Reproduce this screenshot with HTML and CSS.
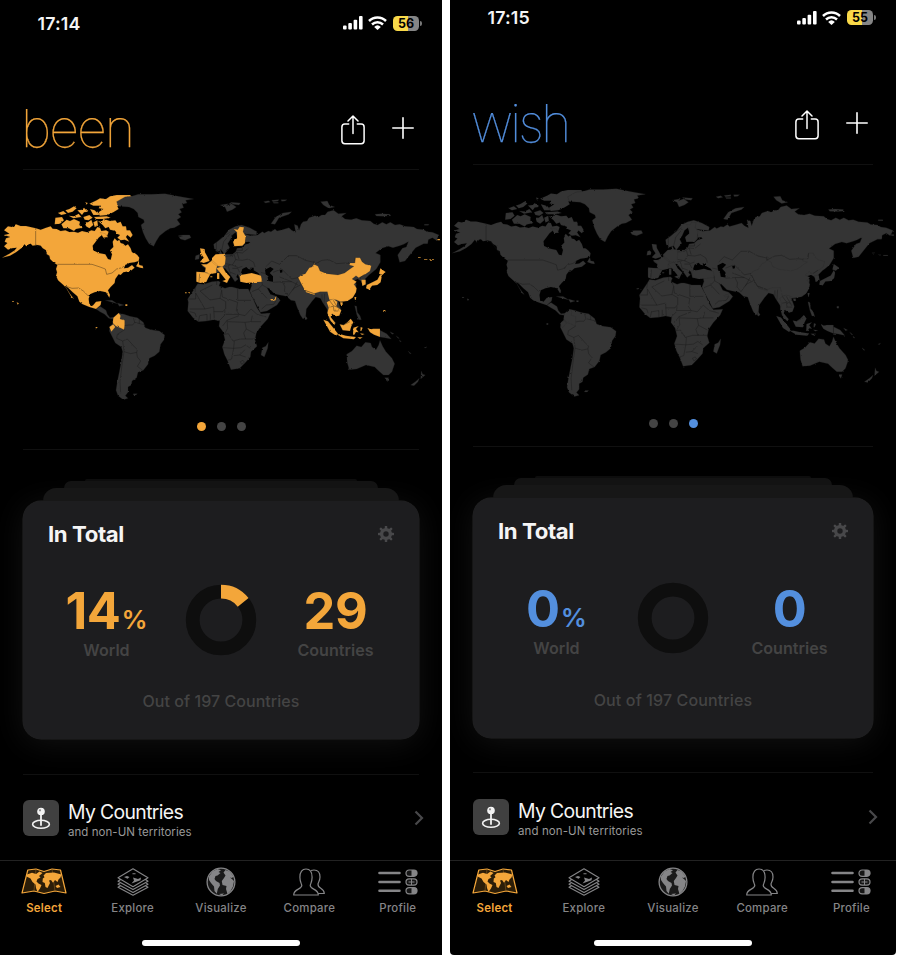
FILE: index.html
```html
<!DOCTYPE html>
<html lang="en">
<head>
<meta charset="utf-8">
<title>been</title>
<link rel="stylesheet" href="styles.css">
</head>
<body>
<svg class="defs" aria-hidden="true">
  <filter id="coast" x="0" y="0" width="1" height="1" color-interpolation-filters="sRGB"><feTurbulence type="fractalNoise" baseFrequency=".3" numOctaves="2" seed="4"/><feDisplacementMap in="SourceGraphic" scale="2" xChannelSelector="R" yChannelSelector="G"/></filter>
  <symbol id="world" viewBox="0 0 1326 660">
    <g class="land">
      <path d="M288,372L300,364 318,376 322,388 330,398 342,396 338,402 326,400 314,388 300,380ZM316,346L336,346 352,356 336,352ZM352,354L372,360 358,364Z"/>
      <path d="M356,384L372,388 390,394 412,398 430,412 436,428 452,434 478,438 494,450 492,464 482,478 478,500 464,512 448,520 444,538 430,556 414,562 410,578 396,588 394,600 384,606 384,622 376,632 384,640 370,644 354,632 348,616 352,590 358,560 364,530 368,500 364,486 346,474 334,450 328,438 330,424 338,416 340,398ZM400,626l12,0-4,4-8,0z"/>
    </g>
    <g class="seen">
      <path d="M12,136L24,124 36,126 48,118 62,123 78,123 108,130 122,134 138,128 152,124 158,131 170,132 182,138 196,136 208,141 222,140 234,143 246,138 262,142 274,136 284,138 292,126 300,128 304,138 318,136 326,140 322,152 306,150 296,158 286,172 278,182 280,196 296,204 316,208 324,222 332,224 336,208 330,196 340,186 338,170 344,160 352,168 358,164 362,174 370,176 376,182 384,178 392,190 396,202 404,204 412,210 418,218 416,228 404,232 388,234 376,240 372,250 384,248 396,240 404,248 392,258 370,262 362,270 356,268 346,282 344,294 332,306 324,316 330,330 328,338 318,322 300,318 284,322 270,328 266,342 268,356 278,362 288,350 304,348 302,360 288,372 268,366 248,358 238,350 232,334 218,322 204,308 196,304 210,326 222,342 214,336 198,308 190,300 174,286 168,272 171,262 168,252 172,240 160,232 150,222 148,212 140,208 138,196 128,190 122,182 112,180 98,182 92,176 86,178 80,186 74,178 64,190 48,202 30,212 6,218 28,206 44,196 50,188 36,190 24,194 12,184 22,174 14,170 18,160 30,156 12,150 28,146Z"/>
      <path d="M268,56L290,46 300,40 318,42 330,34 350,30 390,30 400,40 384,48 372,52 366,60 352,64 356,72 340,82 322,90 300,92 292,84 310,72 296,70 300,62 280,62ZM166,98L186,96 192,106 180,116 164,118ZM184,118L200,104 210,108 222,102 240,110 238,120 248,128 228,132 222,138 206,130 190,130ZM174,84L190,78 200,86 184,90ZM196,76L208,72 222,64 230,70 218,80 204,84ZM206,92L222,94 236,86 244,96 220,100ZM232,76L246,74 252,68 264,80 252,82 246,90ZM250,96L268,90 278,98 266,106 254,104ZM254,112L264,112 274,104 280,120 268,130 258,124ZM282,96L320,94 332,98 310,102 288,102ZM270,72L284,76 290,82 300,90 280,90ZM256,52l8,2-6,5zM300,142l16,4 8,10-14,2zM280,112l12,-6 2,16-10,4z"/>
      <path d="M294,108L304,110 312,102 330,108 346,106 352,114 362,110 368,124 378,124 380,136 390,136 398,150 392,158 382,150 378,156 388,170 374,164 362,166 352,158 360,150 350,146 346,138 330,134 326,126 316,130 308,120ZM408,244l8,-14 2,10 10,2 2,8-10,-2z"/>
      <path d="M340,398L356,384 362,392 360,402 374,406 374,422 372,434 360,428 348,424 338,414ZM328,426L340,418 346,426 334,440ZM36,348h6v2h-6zM50,352l7,3-4,4zM287,426h5v4h-5zM376,358h6v5h-6z"/>
    </g>
    <path class="border" d="M107,130V180L122,184 132,198 148,218M172,238H276L300,246 316,252 320,268 336,264 350,252 366,248 376,240M198,304L216,310 236,309 250,318 264,332"/>
    <path class="border" d="M374,422L384,420 398,420 404,412M400,398L404,412 436,420M418,402V416M374,434L352,448 350,460 368,468 382,462 402,484 412,494 410,502 M368,468L372,500 392,506 410,502 412,516 422,528 412,544 428,556M372,500L366,540 360,590 362,625"/>
    <g transform="translate(435 0)">
      <g class="land">
        <path d="M-85,50L-60,36 -40,34 -20,28 20,28 60,26 100,34 146,42 122,46 126,54 112,58 116,68 104,72 110,82 100,88 108,96 96,104 106,118 88,128 76,130 62,138 44,152 34,168 26,184 12,176 2,160 -6,142 -12,120 -2,112 -4,104 -20,96 -22,84 -34,72 -48,66 -80,64Z"/>
        <path d="M208,192L206,178 222,166 238,152 252,134 272,124 290,120 314,128 336,140 334,150 310,148 300,146 298,160 304,172 292,184 268,182 266,168 278,158 272,142 262,150 256,164 248,176 254,188 246,198 238,208 230,196 216,200Z"/>
        <path d="M296,146L316,152 338,150 352,140 358,144 370,138 378,140 390,132 396,138 412,134 432,128 440,136 452,142 448,118 458,122 462,136 468,118 474,110 486,108 492,98 510,92 520,96 530,90 540,90 548,80 566,76 580,86 604,84 590,94 600,102 618,104 634,100 650,106 676,108 686,116 698,120 712,112 724,118 736,112 750,120 764,118 780,124 806,126 816,132 836,134 846,140 862,142 882,150 874,166 862,158 850,164 848,176 836,176 812,188 796,208 780,228 764,232 758,210 772,190 784,186 790,170 776,178 764,182 744,188 730,184 710,190 692,204 706,210 706,232 694,252 682,262 672,270 660,282 664,298 654,302 648,288 638,282 624,288 634,296 632,316 626,334 612,346 590,350 580,352 588,374 574,394 560,386 556,396 572,414 566,418 552,402 546,372 534,354 526,340 512,336 500,350 484,372 482,396 474,402 466,390 456,366 450,348 438,346 424,334 404,330 388,326 372,310 366,308 376,328 394,334 406,346 396,360 366,378 346,382 336,362 320,332 314,318 320,302 318,292 304,292 286,290 282,276 278,268 274,276 280,282 270,290 262,278 250,262 240,250 230,250 226,262 206,264 194,268 186,288 170,292 154,288 154,264 178,262 184,252 170,242 186,236 200,228 212,212 222,208 226,196 232,208 262,208 272,200 276,190 290,188 304,176Z"/>
        <path d="M158,296L176,298 200,290 220,288 226,292 222,302 240,310 252,306 262,306 284,312 310,312 322,336 336,368 348,386 376,384 368,402 348,424 334,444 330,464 336,484 318,500 316,516 300,534 284,550 258,554 248,528 238,508 232,486 240,464 234,440 222,424 224,408 206,404 186,408 160,410 144,398 128,378 130,352 128,342 140,324 152,306ZM352,488L362,484 370,472 368,490 358,516 348,510Z"/>
        <path d="M378,116L392,96 414,84 440,80 432,88 402,98 390,118ZM226,60L250,56 244,62 260,56 274,66 262,74 246,80 240,66ZM256,52L286,54 282,60 264,58ZM100,152L114,150 134,150 138,158 120,166 106,162ZM356,50l14,-3 6,4-14,3zM380,46l20,-2 0,4-16,2zM408,44l18,0-6,4-10,1zM384,52l16,0 0,3-14,0zM527,50L547,48 553,60 569,66 551,70 535,60ZM690,88l20,-2 24,2 4,4-20,2-24,-1zM838,118l14,0-2,3-12,0zM150,224L152,212 164,208 162,222Z"/>
      </g>
      <path class="sea" d="M288,264L292,252 304,246 310,252 318,254 316,248 326,248 326,256 340,264 344,270 320,266 304,268 290,270ZM360,254L376,246 386,252 378,260 374,264 384,274 384,290 370,288 368,276 362,268ZM404,256l8,-2 0,8-6,2zM300,172l12,-2 4,4-12,4z"/>
      <g class="seen">
        <path d="M266,132L278,134 284,125 297,127 294,140 302,154 300,174 292,182 268,184 264,170 276,160 276,142ZM165,190L179,192 180,202 188,216 194,228 176,234 165,230 176,218 168,206ZM168,238L186,238 202,226 218,240 214,252 214,264 194,268 180,262 182,248ZM198,222L212,208 240,206 242,220 240,238 232,246 214,242 202,232ZM154,260L178,262 196,268 188,282 184,291 166,294 154,290ZM214,250L232,244 242,262 256,276 252,282 246,294 232,288 242,284 226,264ZM216,264h7v18h-7zM284,270L300,268 320,264 334,268 348,272 352,290 330,292 304,294 286,290ZM378,342l8,0 8,-8-2,12-8,2zM196,274h6v3h-6zM120,322h5v3h-5zM130,322h5v3h-5z"/>
      </g>
      <path class="border" d="M214,206V172L230,158 254,142M230,196L236,170 256,146M164,266L162,290M242,214L262,212 276,202 292,204 310,190M242,236L262,240 272,224 268,210M272,224L292,226 310,222 326,232 330,246M262,240L280,248 292,244M272,196H292V188M276,202L282,222M250,244L256,266M262,250H278L284,262M256,262L272,268M240,244L256,240M345,262L364,266M350,284L352,300 340,312 320,320M352,300L366,308M340,312L366,340M384,292L412,290 420,306 418,318 430,332M364,244L380,228 404,238 430,212 455,212 481,226 507,232M384,262L410,252 440,282 459,278M404,276L440,290M412,290L440,290 459,300M350,372L364,360 386,358 394,346M430,332L446,310 466,300"/>
      <path class="border" d="M152,306L150,322M165,318L195,345M130,342h22v-18M152,324L180,372H134M165,318L202,300M195,345L225,340 230,316 224,302M215,288V300M225,340L242,350M230,316L232,336 278,352M278,312V346H318M278,352L274,376 282,388M242,350V370L234,380M180,372L206,366 208,404M234,380H206M160,410L164,392 186,388V408M196,404V386M134,380L150,384 154,396M222,408L238,392 240,376M242,388L282,388 300,392 318,372M246,406L282,392M246,406L232,424M246,406L248,430 238,448M248,410L300,412 304,432 296,444 302,462 286,462 264,468 250,446 238,448M300,412L318,410 322,392M304,432L330,446M302,462L332,462M268,468L266,490 234,488M266,490L288,488 302,480 316,490M266,490L260,522 248,526M266,512L284,510 300,494M284,510L302,516M318,372L336,388 364,396M318,410L348,410M286,530l8,-4 4,6-8,6z"/>
    </g>
    <g transform="translate(870 0)">
      <g class="land"><path d="M170,508L186,498 200,482 214,486 226,472 242,474 246,486 258,494 266,480 270,466 278,484 288,500 306,520 314,536 306,560 296,570 280,570 264,556 254,546 228,540 200,552 178,554 172,534ZM284,578h12l-4,12zM394,558L398,568 406,570 392,582ZM388,580L384,590 372,602 362,600 376,590ZM270,436L290,446 304,462 284,458 270,456ZM194,362l6,2 2,18 8,10 4,12-8,0-6,-16zM46,392l6,8-4,5-5,-4zM300,440l12,6-6,2zM318,452l10,8-4,0zM328,464l6,6-4,0zM354,498l10,8-4,0zM402,488l8,-3-2,4z"/></g>
      <g class="seen">
        <path d="M24,278L34,270 46,266 58,248 66,246 72,238 84,244 90,258 110,266 144,270 164,264 180,252 192,244 178,240 180,234 194,234 196,218 210,218 216,230 226,238 244,242 240,258 226,268 206,278 198,272 186,282 200,290 192,298 200,310 198,322 188,338 172,348 152,350 138,344 118,344 112,320 90,320 70,326 44,316 34,298Z"/>
        <path d="M214,284h13v14l-10,5zM267,266L271,250 287,261 277,270ZM271,268L275,276 272,292 262,300 246,302 238,314 228,310 230,300 250,290 262,284ZM46,316l28,10v4l-26,-8zM110,352L120,346 130,342 142,350 140,364 154,376 148,392 138,394 126,386 122,396 136,414 134,420 122,408 112,384 116,368ZM150,352h8v8h-6zM193,336h6l-3,14zM100,404L114,409 128,426 144,446 138,452 120,440ZM140,448L152,448 168,452 198,456 192,463 160,460ZM149,418L160,420 172,412 182,401 190,412 184,424 180,438 158,436ZM190,428l16,-5 -8,9 8,10-8,-1 -5,8-4,0zM212,426l6,2-4,10-3,0zM202,457l16,0-8,5zM210,445l14,2-8,3zM232,428L242,433 250,431 270,431V456L252,449 240,442Z"/><path d="M280,375h6v6h-6zM442,162h8v4h-8zM384,216h8v2h-8zM402,222h10v2h-10zM418,223h14v2h-14z"/>
      </g>
      <path class="border" d="M72,238L96,226 116,224 140,236 164,234 180,236M72,238V228M194,234L196,218M24,278L34,298 44,316 72,326M22,290L8,316M96,328V346M104,326L102,356M118,346L130,362 140,366M118,366L130,364 132,378 148,378M130,346L146,374M160,420L180,410M210,278L224,268"/>
    </g>
  </symbol>

  <symbol id="signal" viewBox="0 0 20 14"><g fill="#fff"><rect y="9.5" width="3.6" height="4" rx="1"/><rect x="5.3" y="7" width="3.6" height="6.5" rx="1"/><rect x="10.6" y="3.8" width="3.6" height="9.7" rx="1"/><rect x="16" y="0" width="3.6" height="13.5" rx="1"/></g></symbol>
  <symbol id="wifi" viewBox="0 0 19 14"><g fill="none" stroke="#fff" stroke-width="2.5"><path d="M1 5A12 12 0 0 1 18 5"/><path d="M4 8.5A8 8 0 0 1 15 8.5"/></g><path d="M9.5 14L6.2 10.9A4.8 4.8 0 0 1 12.8 10.9Z" fill="#fff"/></symbol>
  <symbol id="share" viewBox="0 0 24 30"><g fill="none" stroke="#fff" stroke-width="1.5" stroke-linecap="round" stroke-linejoin="round"><path d="M7.7 9H3.8Q.9 9 .9 11.9V25.8Q.9 28.7 3.8 28.7H20.2Q23.1 28.7 23.1 25.8V11.9Q23.1 9 20.2 9H16.3"/><path d="M12 18.5V1.2M7 6L12 1 17 6"/></g></symbol>
  <symbol id="plus" viewBox="0 0 22 22"><path d="M11 .8V21.2M.8 11H21.2" stroke="#fff" stroke-width="1.6" stroke-linecap="round"/></symbol>
  <symbol id="gear" viewBox="-8 -8 16 16"><g fill="none" stroke="#48484a"><circle r="4.4" stroke-width="3.4"/><path d="M0-5V-7.2M0 5V7.2M-5 0H-7.2M5 0H7.2M3.5-3.5L5.1-5.1M3.5 3.5L5.1 5.1M-3.5 3.5L-5.1 5.1M-3.5-3.5L-5.1-5.1" stroke-width="2.5" stroke-linecap="round"/></g></symbol>
  <symbol id="pin" viewBox="0 0 36 36"><ellipse cx="18" cy="24.3" rx="8.4" ry="4" fill="none" stroke="#f2f2f2" stroke-width="1.6"/><path d="M18 12V25" stroke="#f2f2f2" stroke-width="1.8" stroke-linecap="round"/><circle cx="18" cy="11.5" r="3.8" fill="#f2f2f2"/><circle cx="17" cy="10.3" r="1.1" fill="#888"/></symbol>
  <symbol id="chevron" viewBox="0 0 10 16"><path d="M1.5 1.5L8 8 1.5 14.5" fill="none" stroke="#48484a" stroke-width="2.2"/></symbol>

  <symbol id="tab-map" viewBox="0 0 46 27">
    <path d="M6.8 2L15 1 23 3.5 31 1 39.5 2 45 25 34 23 23 25.5 13 23 1 25Z" fill="#2b1d08" stroke="#f3a63a" stroke-width="1.2" stroke-linejoin="round"/>
    <path d="M15 1L13 23M31 1L34 23" stroke="#7a541d" stroke-width=".7"/>
    <path d="M6 6.5L11 4.8 15 6 18.5 3.5 21.5 5 18 8 19.5 9.5 16.5 11 15.5 13.5 17.5 15.5 20.5 17 19 20.5 16.5 24 15 20 14.5 16.5 11.5 14 9.5 10.5 5.5 8.5ZM22.5 7.5L25 5 33 4.5 40.5 6.5 39.5 9.5 37.5 11.5 36.5 14 34 12 32 14.8 30 12 28 12.5 29 15 26.5 20 24.5 19 23.8 15 21.5 14 21.8 10.5 23.5 9.2ZM34.5 18L37.5 16.5 39.5 19 36 20Z" fill="#f3a63a"/>
  </symbol>
  <symbol id="tab-layers" viewBox="0 0 32 28"><g fill="none" stroke="#858587" stroke-width="1.1" stroke-linejoin="round"><path d="M16 .8L31 9.8 16 18.8 1 9.8ZM3.5 11.5L1 13.3 16 21.6 31 13.3 28.5 11.5M3.5 14.6L1 16.3 16 24.5 31 16.3 28.5 14.6M3.5 17.7L1 19.2 16 27.3 31 19.2 28.5 17.7"/></g><path d="M7 9L10 8 12.5 9 10.5 10.8ZM16 9.5L21 11 24 9.5 23.5 12.2 14.5 15.5 17 12.5ZM15.5 5.2h3v1h-3z" fill="#858587"/></symbol>
  <symbol id="tab-globe" viewBox="0 0 30 30"><circle cx="15" cy="15" r="13.9" fill="#1a1a1a" stroke="#858587" stroke-width="1.3"/><path d="M3 9.5L6.5 4.5 11.5 2 15 3.2 12.5 5 14.5 6 11.5 8.5 9.5 9 8.5 12 10 14 13.5 16 14 18.5 11.8 22 10.8 26.8 8.5 24 8 19.5 5 16 3 13ZM17.5 5.5L19.5 3 23.5 4.5 27.5 9.5 26 11 24 10.5 26.5 12.5 28 14 27 19.5 24.5 24 21.5 27 20 22 20.5 19 16.5 18 15.8 14 18 11 19.5 8.5ZM13 27l5,-.5-2,2z" fill="#858587"/></symbol>
  <symbol id="tab-people" viewBox="0 0 32 28"><g fill="#000" stroke="#858587" stroke-width="1.2" stroke-linejoin="round"><path d="M18 2.5Q19.500 2 21 2C25 2 27 5 27 9C27 12.500 25.500 14 25 16C24.500 21 31 19.500 31.300 25.500H24"/><path d="M.7 27C.7 20.500 8.800 21.800 8.800 17.200C8.100 15 6.900 13.500 6.900 9.200C6.900 4 9.200 1 13 1S19.100 4 19.100 9.200C19.100 13.500 17.900 15 17.200 17.200C17.200 21.800 25.300 20.500 25.300 27Z"/></g></symbol>
  <symbol id="tab-list" viewBox="0 0 40 26"><path d="M1.5 4H21.5M1.5 13H21.5M1.5 21.8H21.5" stroke="#858587" stroke-width="2.6" stroke-linecap="round"/><g fill="#161616" stroke="#858587" stroke-width="1.2"><rect x="28" y="1" width="11" height="6.3" rx="3.1"/><rect x="28" y="9.8" width="11" height="6.3" rx="3.1"/><rect x="28" y="18.6" width="11" height="6.3" rx="3.1"/></g><path d="M33.5 1H36A3.1 3.1 0 0 1 36 7.3H33.5ZM33.5 18.6H36A3.1 3.1 0 0 1 36 24.9H33.5ZM33 9.8H34V16H33ZM30.5 12.5H36.5V13.5H30.5Z" fill="#858587"/></symbol>
</svg>

<main class="screens">
  <section class="phone been">
    <div class="status"><span class="time">17:14</span><svg class="signal"><use href="#signal"/></svg><svg class="wifi"><use href="#wifi"/></svg><span class="battery">56</span></div>
    <header class="head"><h1>been</h1><svg class="share"><use href="#share"/></svg><svg class="plus"><use href="#plus"/></svg></header>
    <div class="maps"><svg class="world"><use href="#world"/></svg><div class="dots"><i class="on"></i><i></i><i></i></div></div>
    <div class="deck">
      <div class="card">
        <div class="cardhead"><h2>In Total</h2><svg class="gear"><use href="#gear"/></svg></div>
        <div class="stats">
          <div class="stat"><b>14<small>%</small></b><span>World</span></div>
          <svg class="donut" viewBox="-36 -36 72 72"><circle class="ring" r="28.3"/><circle class="slice" r="28.3" pathLength="100" stroke-dasharray="14.3 85.7"/></svg>
          <div class="stat"><b>29</b><span>Countries</span></div>
        </div>
        <p>Out of 197 Countries</p>
      </div>
    </div>
    <div class="row"><svg class="pin"><use href="#pin"/></svg><div class="rowtext"><strong>My Countries</strong><span>and non-UN territories</span></div><svg class="chevron"><use href="#chevron"/></svg></div>
    <nav class="tabs">
      <a class="active"><svg class="i-map"><use href="#tab-map"/></svg>Select</a>
      <a><svg class="i-layers"><use href="#tab-layers"/></svg>Explore</a>
      <a><svg class="i-globe"><use href="#tab-globe"/></svg>Visualize</a>
      <a><svg class="i-people"><use href="#tab-people"/></svg>Compare</a>
      <a><svg class="i-list"><use href="#tab-list"/></svg>Profile</a>
    </nav>
    <div class="homebar"></div>
  </section>

  <section class="phone wish">
    <div class="status"><span class="time">17:15</span><svg class="signal"><use href="#signal"/></svg><svg class="wifi"><use href="#wifi"/></svg><span class="battery">55</span></div>
    <header class="head"><h1>wish</h1><svg class="share"><use href="#share"/></svg><svg class="plus"><use href="#plus"/></svg></header>
    <div class="maps"><svg class="world"><use href="#world"/></svg><div class="dots"><i></i><i></i><i class="on"></i></div></div>
    <div class="deck">
      <div class="card">
        <div class="cardhead"><h2>In Total</h2><svg class="gear"><use href="#gear"/></svg></div>
        <div class="stats">
          <div class="stat"><b>0<small>%</small></b><span>World</span></div>
          <svg class="donut" viewBox="-36 -36 72 72"><circle class="ring" r="28.3"/></svg>
          <div class="stat"><b>0</b><span>Countries</span></div>
        </div>
        <p>Out of 197 Countries</p>
      </div>
    </div>
    <div class="row"><svg class="pin"><use href="#pin"/></svg><div class="rowtext"><strong>My Countries</strong><span>and non-UN territories</span></div><svg class="chevron"><use href="#chevron"/></svg></div>
    <nav class="tabs">
      <a class="active"><svg class="i-map"><use href="#tab-map"/></svg>Select</a>
      <a><svg class="i-layers"><use href="#tab-layers"/></svg>Explore</a>
      <a><svg class="i-globe"><use href="#tab-globe"/></svg>Visualize</a>
      <a><svg class="i-people"><use href="#tab-people"/></svg>Compare</a>
      <a><svg class="i-list"><use href="#tab-list"/></svg>Profile</a>
    </nav>
    <div class="homebar"></div>
  </section>
</main>
</body>
</html>
```
FILE: styles.css
```css
* { box-sizing: border-box; }
body { margin: 0; background: #fff; font-family: Inter, "Liberation Sans", sans-serif; }
svg { display: block; flex: none; }
.defs { position: absolute; width: 0; height: 0; }
.screens { display: flex; gap: 8px; width: 902px; height: 960px; }
.phone { display: flex; flex-direction: column; height: 954.5px; background: #000; overflow: hidden; color: #f5f5f5; }
.been { --w: 442px; --accent: #f3a63a; --seen: #f3a63a; --status: 46px; --head: 124px; --map: 220px; --maps: 280px; --deck: 325px; --card: 238px; --row: 85px; width: var(--w); }
.wish { --w: 446px; --accent: #538fde; --seen: #343434; --status: 35px; --head: 130px; --map: 222px; --maps: 282px; --deck: 326px; --card: 240px; --row: 87px; width: var(--w); border-radius: 0 0 4px 4px; }

.status { flex: none; height: var(--status); display: flex; align-items: center; padding: 0 20px 0 37.5px; }
.time { flex: 1; font-size: 17.8px; font-weight: 600; letter-spacing: .15px; }
.signal { width: 20px; height: 14px; margin-right: 5px; }
.wifi { width: 19px; height: 14px; margin-right: 6px; }
.battery { position: relative; width: 26px; height: 15px; margin-right: 3px; border-radius: 4.5px; background: linear-gradient(90deg, #f9d949 57%, #858585 57%); color: #000; font-size: 12.5px; line-height: 15.5px; font-weight: 700; text-align: center; }
.battery::after { content: ""; position: absolute; right: -2.5px; top: 5px; width: 1.5px; height: 5px; border-radius: 0 2px 2px 0; background: #777; }

.head { position: relative; flex: none; height: var(--head); display: flex; align-items: flex-end; padding: 0 28px 0 21px; }
.head::after, .maps::after, .deck::after { content: ""; position: absolute; left: 23px; right: 23px; bottom: 0; height: 1px; background: #101010; }
h1 { flex: 1; margin: 0 0 9px; font-size: 52px; line-height: 64px; font-weight: 100; letter-spacing: -2px; color: var(--accent); -webkit-text-stroke: .25px var(--accent); }
.wish h1 { letter-spacing: -3px; }
.share { width: 24px; height: 30px; margin: 0 27px 25px 0; }
.plus { width: 22px; height: 22px; margin-bottom: 31px; }

.maps { position: relative; flex: none; height: var(--maps); padding-top: 15px; }
.world { width: var(--w); height: var(--map); filter: url(#coast); }
.land { fill: #343434; stroke: #202020; stroke-width: .8; }
.seen { fill: var(--seen); stroke: #202020; stroke-width: .4; }
.sea { fill: #000; }
.border { fill: none; stroke: #141414; stroke-width: 1.5; stroke-opacity: .75; }
.dots { display: flex; justify-content: center; gap: 11px; margin-top: 17px; }
.dots i { width: 9px; height: 9px; border-radius: 50%; background: #444; }
.dots .on { background: var(--accent); }

.deck { position: relative; flex: none; height: var(--deck); padding: 51px 23px 0; }
.card { position: relative; height: var(--card); border-radius: 18px; background: #1d1d1f; padding: 0 25px; box-shadow: 0 0 0 .5px #222, 0 4px 32px 0 #121212; }
.deck::before { content: ""; position: absolute; z-index: 1; left: 43px; right: 43px; top: 38px; height: 13px; border-radius: 18px 18px 0 0; background: #171717; }
.card::before { content: ""; position: absolute; left: 41px; right: 41px; top: -20px; height: 7px; border-radius: 16px 16px 0 0; background: #131313; }
.card::after { content: ""; position: absolute; left: 62px; right: 62px; top: -22px; height: 2px; border-radius: 16px 16px 0 0; background: #0d0d0d; }
.cardhead { display: flex; justify-content: space-between; align-items: center; height: 66px; }
h2 { margin: 0 0 2px; font-size: 22.2px; font-weight: 700; letter-spacing: -.4px; }
.gear { width: 16px; height: 16px; }
.stats { display: grid; grid-template-columns: 117px 72px 117px; justify-content: space-between; height: 106px; padding-top: 16px; }
.wish .stats { padding-top: 17px; }
.stat { display: flex; flex-direction: column; align-items: center; white-space: nowrap; }
.stat b { height: 56px; color: var(--accent); font-size: 50.5px; line-height: 56px; font-weight: 700; letter-spacing: -.4px; }
.stat small { font-size: 26px; line-height: 1; font-weight: 600; letter-spacing: 0; margin-left: 1px; }
.stat span { font-size: 16.1px; line-height: 23px; font-weight: 600; color: #444; }
.donut { width: 72px; height: 72px; margin-top: 1px; }
.donut circle { fill: none; stroke-width: 13.8; }
.ring { stroke: #0e0e0e; }
.slice { stroke: var(--accent); transform: rotate(-90deg); }
.card p { margin: 16px 0 0; text-align: center; font-size: 16px; line-height: 24px; font-weight: 500; letter-spacing: .05px; color: #444; }
.wish .card p { margin-top: 18px; letter-spacing: .13px; }

.row { flex: none; height: var(--row); display: flex; align-items: center; padding: 0 18px 0 23px; }
.pin { width: 36px; height: 36px; border-radius: 6px; background: #404040; }
.rowtext { flex: 1; padding: 3px 0 0 9px; display: flex; flex-direction: column; }
.rowtext strong { font-size: 19.4px; line-height: 24px; font-weight: 400; letter-spacing: -.65px; padding-top: 1px; }
.rowtext span { font-size: 11.5px; line-height: 16px; color: #999; letter-spacing: .05px; }
.wish .rowtext span { letter-spacing: .1px; }
.chevron { width: 10px; height: 16px; }
.wish .row { padding: 1px 18px 0 23px; }

.tabs { flex: none; display: grid; grid-template-columns: repeat(5, 1fr); height: 80px; border-top: 1px solid #222; padding-top: 4px; }
.tabs a { display: grid; grid-template-rows: 33px 19px; align-content: start; place-items: center; font-size: 11.4px; font-weight: 500; letter-spacing: .25px; color: #858587; }
.tabs .active { color: #f3a63a; font-weight: 600; }
.i-map { width: 46px; height: 27px; }
.i-layers { width: 32px; height: 28px; }
.i-globe { width: 30px; height: 30px; }
.i-people { width: 32px; height: 28px; }
.i-list { width: 40px; height: 26px; }
.homebar { flex: none; width: 158px; height: 6px; margin: 0 auto; border-radius: 3px; background: #fff; }
```
